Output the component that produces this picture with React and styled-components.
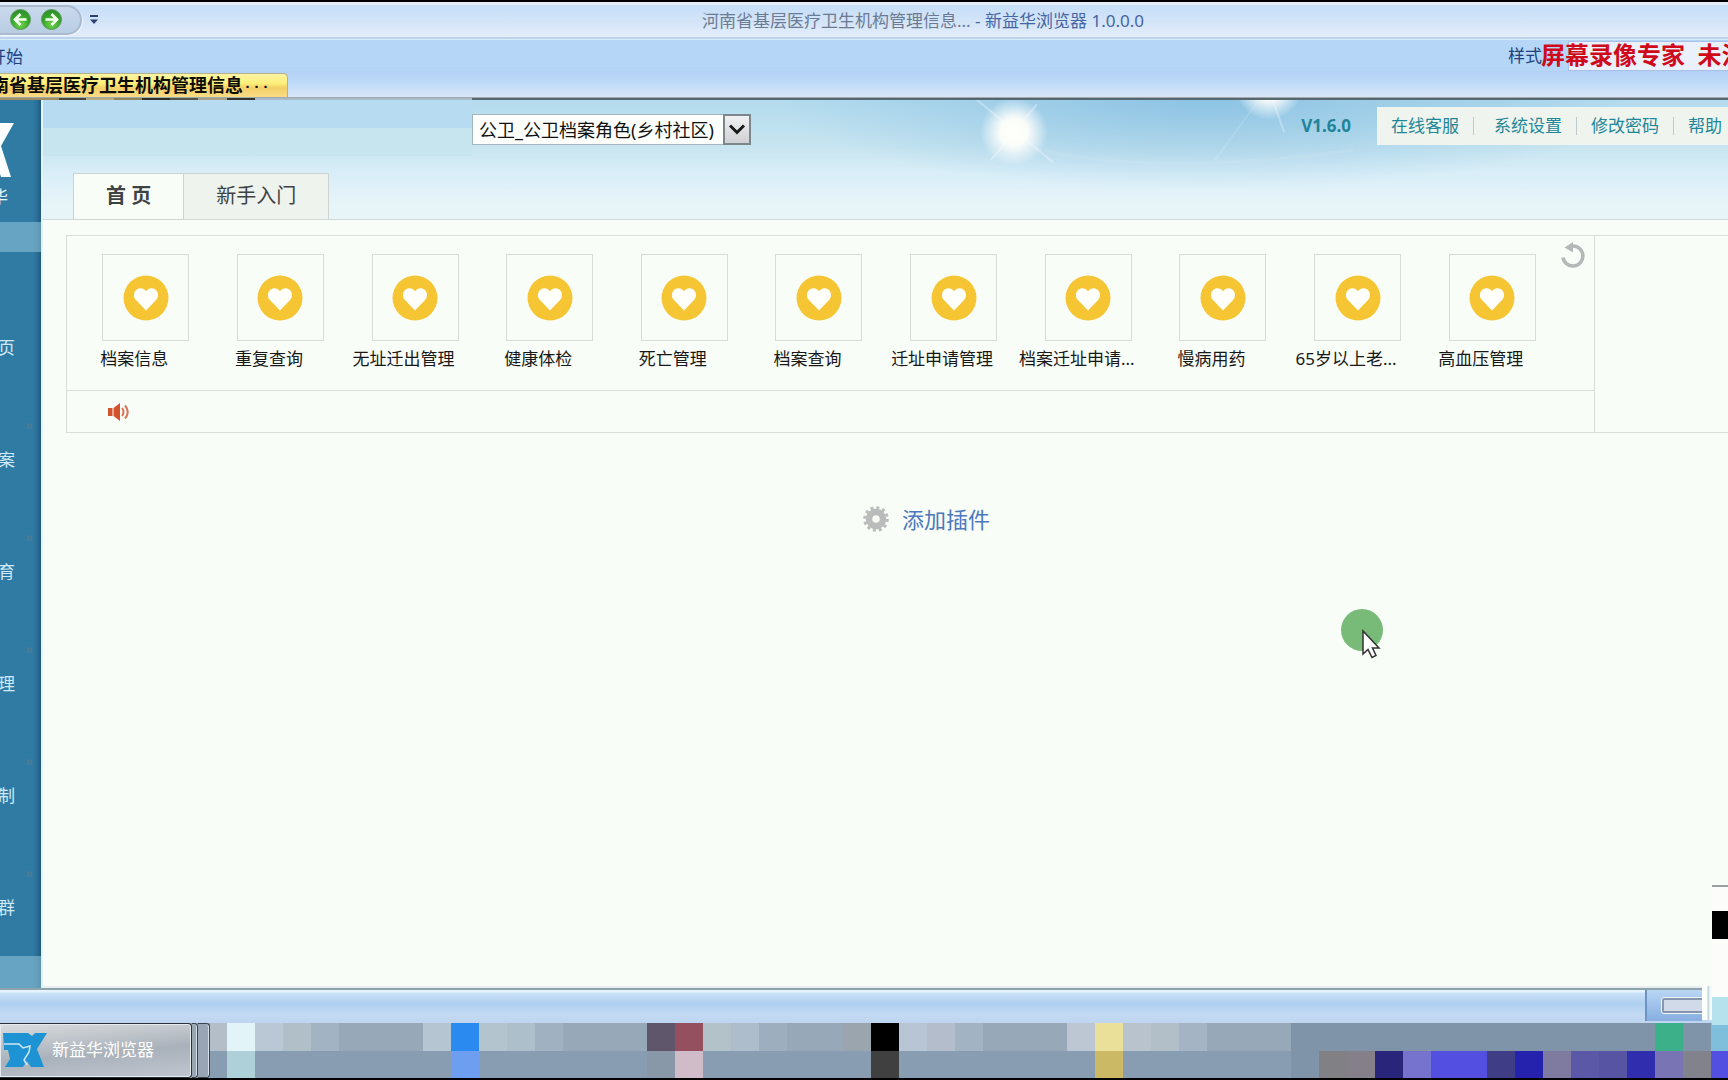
import React from "react";
import styled, { createGlobalStyle } from "styled-components";

const Global = createGlobalStyle`
  * { box-sizing: border-box; }
  body {
    margin: 0;
    overflow: hidden;
    font-family: "Noto Sans", "Noto Sans CJK SC", sans-serif;
    font-size: 17px;
    line-height: 24px;
    color: #222;
  }
  button, input, select { font: inherit; color: inherit; margin: 0; }
  button { padding: 0; border: 0; background: none; }
  a { color: inherit; text-decoration: none; }
`;

const Screen = styled.div`
  position: relative;
  display: flex;
  flex-direction: column;
  height: 100vh;
  overflow: hidden;
  background: #f8fdf7;
  border-top: 2px solid #000;
  border-bottom: 2px solid #000;
`;

/* ---------- window chrome ---------- */

const TitleBar = styled.header`
  flex: none;
  display: grid;
  grid-template-columns: 1fr auto 1fr;
  align-items: center;
  height: 37px;
  border-bottom: 2px solid #bdd3ea;
  background: linear-gradient(#e4eefa 0 3px, #c5def8 3px, #d5e5f8 60%, #e3edfa);
`;

const QuickTools = styled.div`
  display: flex;
  align-items: center;
  gap: 8px;
`;

const QuickPill = styled.div`
  display: flex;
  align-items: center;
  gap: 10px;
  height: 30px;
  padding: 0 18px 0 10px;
  border: 2px solid #a9bbd0;
  border-left: 0;
  border-radius: 0 16px 16px 0;
  background: linear-gradient(#c9d9ec, #b9cde3);
  box-shadow: 1px 1px 0 #eef5fd;
`;

const IconButton = styled.button`
  display: flex;
  align-items: center;
  justify-content: center;
`;

const Title = styled.h1`
  margin: 0;
  padding: 2px 0 0 118px;
  font-size: 17px;
  font-weight: 400;
  line-height: 24px;
  white-space: pre;
  color: #6b7b93;
`;

const AppName = styled.span`
  color: #4566a3;
`;

const TitleEnd = styled.div`
  min-width: 0;
`;

const Ribbon = styled.div`
  position: relative;
  flex: none;
  display: flex;
  align-items: center;
  justify-content: space-between;
  height: 32px;
  border-top: 1px solid #d8ebfb;
  background: #b5d6f6;
  color: #20417f;
`;

const ClippedLeft = styled.span`
  flex: none;
  display: flex;
  justify-content: flex-end;
  width: ${(p) => p.$width}px;
  overflow: hidden;
  white-space: nowrap;
`;

const RibbonButton = styled.button`
  padding-top: 2px;
`;

const StyleField = styled.label`
  display: flex;
  align-items: center;
  gap: 26px;
`;

const StyleInput = styled.input`
  width: 160px;
  height: 30px;
  border: 1px solid #a9c1e6;
  border-right: 0;
  background: #eaf1fb;
`;

const Watermark = styled.div`
  position: absolute;
  top: 0;
  right: 0;
  width: 187px;
  height: 31px;
  overflow: hidden;
  white-space: pre;
  font-size: 24px;
  font-weight: 700;
  line-height: 30px;
  color: #cf0a1a;
`;

const TabStrip = styled.div`
  flex: none;
  height: 26px;
  padding-top: 2px;
  background: linear-gradient(#b3cff3, #bfdbfa 45%, #d8e5f6);
`;

const BrowserTab = styled.button`
  display: flex;
  align-items: center;
  width: 288px;
  height: 24px;
  overflow: hidden;
  border: 1px solid #b3b38e;
  border-left: 0;
  border-bottom: 0;
  border-radius: 0 5px 0 0;
  background: linear-gradient(#fdf3a4, #fdf07a 40%, #f3cf68 60%, #fbdc85);
  font-size: 18px;
  font-weight: 700;
  line-height: 22px;
  padding-bottom: 2px;
  color: #0d0d05;
`;

const Dots = styled.span`
  font-family: "Liberation Mono", monospace;
  font-size: 15px;
`;

const Edge = styled.div`
  flex: none;
  height: 3px;
  border-top: 1px solid #9fa9ae;
  background: linear-gradient(
    90deg,
    #a08e5e 0 59px, #45453a 59px 86px, #b9ab80 86px 114px, #94855a 114px 142px,
    #2f3025 142px 170px, #55564a 170px 198px, #a8a184 198px 227px, #33352c 227px 255px,
    #a9bbc8 255px 472px, #56676f 472px
  );
`;

/* ---------- application ---------- */

const Body = styled.div`
  flex: 1;
  min-height: 0;
  display: flex;
`;

const Sidebar = styled.nav`
  flex: none;
  display: flex;
  flex-direction: column;
  width: 43px;
  border-right: 2px solid #dff5f8;
  background: linear-gradient(90deg, #2f7ba4 0 33px, #296f97 37px, #23597b);
  color: #cfeaf7;
`;

const Brand = styled.div`
  display: flex;
  flex-direction: column;
  gap: 8px;
  height: 122px;
  padding-top: 23px;
  color: #e9f6fb;
`;

const SideBand = styled.div`
  height: ${(p) => p.$height}px;
  background: rgba(160, 205, 225, 0.5);
`;

const SideList = styled.ul`
  flex: 1;
  min-height: 0;
  margin: 0;
  padding: 40px 0 0;
  list-style: none;
`;

const SideItem = styled.li`
  display: flex;
  flex-direction: column;
  height: 112px;
`;

const SideArrow = styled.span`
  flex: none;
  height: 44px;
  padding: 12px 8px 0 0;
  text-align: right;
  font-size: 15px;
  line-height: 16px;
  color: #547b91;
`;

const Main = styled.main`
  flex: 1;
  min-width: 0;
  display: flex;
  flex-direction: column;
  border-bottom: 2px solid #e6eeee;
`;

const Banner = styled.div`
  position: relative;
  flex: none;
  display: flex;
  flex-direction: column;
  justify-content: space-between;
  height: 120px;
  overflow: hidden;
  border-bottom: 1px solid #cfd6d6;
  background:
    linear-gradient(#b7dcf1 0 28px, #c6e5ee 28px) 0 0 / 429px 56px no-repeat,
    radial-gradient(ellipse 430px 90px at 69% 0, rgba(125, 185, 223, 0.7), rgba(125, 185, 223, 0)),
    linear-gradient(#b3dbee, #c8e5f0 40%, #d9eef8 62%, #e8f5f8 90%);
`;

const Sky = styled.svg`
  position: absolute;
  top: 0;
  left: 54%;
  width: 420px;
  height: 90px;
`;

const BannerTop = styled.div`
  position: relative;
  display: flex;
  align-items: flex-end;
  height: 45px;
  padding-left: 429px;
`;

const RoleField = styled.div`
  display: grid;
  grid-template-columns: 1fr 28px;
  width: 279px;
  height: 31px;
`;

const RoleSelect = styled.select`
  grid-area: 1 / 1 / 2 / 3;
  appearance: none;
  padding: 0 0 0 6px;
  border: 1px solid #a3b7bf;
  border-radius: 0;
  background: #fdfffd;
  font-size: 18px;
  color: #111;
`;

const RoleArrow = styled.span`
  grid-area: 1 / 2 / 2 / 3;
  display: flex;
  align-items: center;
  justify-content: center;
  border: 2px solid #7d868c;
  background: linear-gradient(#f1f1f3, #cfd0d4);
  pointer-events: none;
`;

const Version = styled.strong`
  margin-left: auto;
  padding-right: 26px;
  line-height: 38px;
  color: #1f8499;
`;

const TopLinks = styled.nav`
  display: flex;
  align-items: center;
  height: 38px;
  padding: 0 6px 0 14px;
  background: #eff4ef;
  color: #23879a;
`;

const Bar = styled.i`
  width: 1px;
  height: 18px;
  margin: 0 ${(p) => (p.$wide ? 20 : 14)}px 0 14px;
  background: #c0cacb;
`;

const PageTabs = styled.div`
  position: relative;
  display: flex;
  padding-left: 30px;
`;

const PageTab = styled.button`
  height: 46px;
  padding: 0 32px 2px;
  border: 1px solid #ccd3d1;
  border-bottom: 0;
  border-left-width: ${(p) => (p.$active ? 1 : 0)}px;
  background: ${(p) => (p.$active ? "#f8fdf7" : "#eff3ee")};
  font-size: 20px;
  font-weight: ${(p) => (p.$active ? 700 : 400)};
  line-height: 28px;
  color: #3d4243;
  white-space: pre;
`;

const Board = styled.section`
  display: flex;
  margin: 15px 0 0 23px;
  border: 1px solid #d7dedb;
  border-right: 0;
`;

const Panel = styled.div`
  flex: 1;
  min-width: 0;
  border-right: 1px solid #d7dedb;
`;

const BoardRest = styled.div`
  flex: none;
  width: 133px;
`;

const Shortcuts = styled.div`
  display: flex;
  height: 155px;
  border-bottom: 1px solid #d7dedb;
`;

const ShortcutGrid = styled.div`
  flex: 1;
  min-width: 0;
  display: grid;
  grid-template-columns: repeat(11, 1fr);
  padding-top: 18px;
`;

const Shortcut = styled.a`
  display: flex;
  flex-direction: column;
  align-items: center;
  gap: 6px;
  min-width: 0;
  white-space: nowrap;
  color: #181818;
`;

const Tile = styled.span`
  display: flex;
  align-items: center;
  justify-content: center;
  width: 87px;
  height: 87px;
  margin-left: 23px;
  border: 1px solid #d5dcda;
`;

const Tools = styled.div`
  width: 46px;
  padding: 6px 0 0 13px;
`;

const Notice = styled.div`
  display: flex;
  align-items: center;
  height: 41px;
  padding-left: 40px;
`;

const AddPlugin = styled.button`
  display: flex;
  align-items: center;
  align-self: center;
  gap: 13px;
  margin: 70px 0 0 82px;
  font-size: 22px;
  line-height: 32px;
  color: #4c78bd;
`;

/* ---------- status bar and taskbar ---------- */

const StatusBar = styled.div`
  flex: none;
  display: flex;
  justify-content: flex-end;
  height: 35px;
  padding-right: 26px;
  border-top: 2px solid #8fa3ad;
  background: linear-gradient(#e4f3fc 0 2px, #cbe2f7 3px, #afd0f0 40%, #c3daf3 75%, #bed4ef);
`;

const ZoomBox = styled.div`
  display: flex;
  align-items: center;
  justify-content: flex-end;
  width: 57px;
  height: 31px;
  border-left: 2px solid #6d93c4;
  background: linear-gradient(#b9d6f5, #86aee0);
`;

const ZoomTrack = styled.span`
  width: 40px;
  height: 15px;
  border: 2px solid #8696ae;
  border-right: 0;
  border-radius: 2px 0 0 2px;
  outline: 1px solid #eff5fc;
  background: #d1dae8;
`;

const Taskbar = styled.footer`
  flex: none;
  display: flex;
  height: 55px;
  background: #889db1;
`;

const TaskButton = styled.button`
  display: flex;
  align-items: center;
  gap: 5px;
  width: 192px;
  padding: 0 0 2px 3px;
  border: 1px solid #2c3238;
  border-left: 0;
  border-radius: 0 4px 4px 0;
  background: linear-gradient(175deg, #dadddf, #a9b1ba 55%, #bfc6cf);
  box-shadow: inset 0 0 0 1px #e6ebef;
  color: #fff;
`;

const TaskStack = styled.span`
  width: ${(p) => p.$width}px;
  border: 1px solid #39434f;
  border-left: 0;
  border-radius: 0 4px 4px 0;
  background: #98a5b4;
  box-shadow: inset -1px 0 0 #d8e0e8;
`;

const Mosaic = styled.div`
  flex: 1;
  min-width: 0;
  display: grid;
  grid-template-columns: 17px repeat(54, 28px);
  grid-template-rows: 28px 27px;
  overflow: hidden;
`;

const Block = styled.i`
  background: ${(p) => p.$color};
`;

/* ---------- things floating over the desktop ---------- */

const Pointer = styled.svg`
  position: absolute;
  left: 1341px;
  top: 606px;
  width: 44px;
  height: 52px;
`;

const SideWidget = styled.div`
  position: absolute;
  right: 0;
  bottom: 53px;
  display: flex;
  flex-direction: column;
  width: 16px;
  height: 140px;
  border-top: 2px solid #99a09f;
  background: #fcfcfb;
`;

const WidgetBlock = styled.i`
  height: 28px;
  margin-top: ${(p) => p.$top}px;
  background: ${(p) => p.$color};
`;

const WidgetGap = styled.i`
  position: absolute;
  right: 16px;
  bottom: 58px;
  width: 10px;
  height: 34px;
  background: linear-gradient(90deg, #fcfefc 5px, #b6cfd3 6px, #f4fafa 8px);
`;

/* ---------- drawings ---------- */

const GreenArrow = ({ flip, id }) => (
  <svg width="21" height="21" viewBox="0 0 21 21" aria-hidden="true">
    <defs>
      <radialGradient id={id} cx="50%" cy="75%" r="75%">
        <stop offset="0" stopColor="#6fd34a" />
        <stop offset="0.6" stopColor="#37a42b" />
        <stop offset="1" stopColor="#2c8a2c" />
      </radialGradient>
    </defs>
    <circle cx="10.5" cy="10.5" r="10" fill={`url(#${id})`} stroke="#5a9c5c" />
    <path
      d="M16.5 10.5H5.5M10.5 5 5 10.5l5.500 5.500"
      transform={flip ? "matrix(-1 0 0 1 21 0)" : undefined}
      fill="none"
      stroke="#f6fff2"
      strokeWidth="2.600"
    />
  </svg>
);

const MoreMark = () => (
  <svg width="8" height="10" viewBox="0 0 8 10" aria-hidden="true">
    <path d="M0 1h8" stroke="#2a4172" strokeWidth="2" />
    <path d="M0 4.500h8L4 9z" fill="#2a4172" />
  </svg>
);

const Heart = () => (
  <svg width="46" height="46" viewBox="0 0 46 46" aria-hidden="true">
    <circle cx="23" cy="23" r="22.500" fill="#f5c534" />
    <path
      d="M23 35.500 12.700 24.800C9.800 21.500 10.600 16.600 14 14.300c3-2 6.800-1.200 9 1.900 2.200-3.100 6-3.900 9-1.900 3.400 2.300 4.200 7.200 1.300 10.500z"
      fill="#fffffb"
    />
  </svg>
);

const Refresh = () => (
  <svg width="24" height="28" viewBox="0 0 24 28" aria-hidden="true">
    <path d="M2 15.500a10 10 0 1 0 10-11.500H9" fill="none" stroke="#b5b8b6" strokeWidth="3.600" />
    <path d="M3.500 5.500 12 0v10.500z" fill="#b5b8b6" />
  </svg>
);

const Speaker = () => (
  <svg width="24" height="20" viewBox="0 0 24 20" aria-hidden="true">
    <path d="M1 6h4.500v8H1zM6.500 6 13 1v18l-6.500-5z" fill="#d4532f" />
    <path d="M15 6q3 4 0 8M18 3.500q5.500 6.500 0 13" fill="none" stroke="#dc7556" strokeWidth="2" />
  </svg>
);

const Gear = () => (
  <svg width="26" height="26" viewBox="0 0 26 26" aria-hidden="true">
    <circle cx="13" cy="13" r="7" fill="none" stroke="#b9bcba" strokeWidth="6.500" />
    <circle cx="13" cy="13" r="11.300" fill="none" stroke="#b9bcba" strokeWidth="3" strokeDasharray="3 2.917" />
  </svg>
);

const TaskLogo = () => (
  <svg width="44" height="36" viewBox="0 0 44 36" aria-hidden="true">
    <path d="M0 1h25l4 3 3-3h12L34 17l7 18H28l-4-6-4 6H2l5-8-2-9H1z" fill="#1d93d3" />
    <path d="M1 12l15 0 4 4 7-2-1 6-5 8 3 5" fill="none" stroke="#cfe6f3" strokeWidth="1.500" />
  </svg>
);

const SideLogo = () => (
  <svg width="14" height="54" viewBox="0 0 14 54" aria-hidden="true">
    <path d="M0 0h14L1 23l10 31H1L0 51z" fill="#fbffff" />
  </svg>
);

/* ---------- data ---------- */

const shortcuts = [
  "档案信息", "重复查询", "无址迁出管理", "健康体检", "死亡管理", "档案查询",
  "迁址申请管理", "档案迁址申请...", "慢病用药", "65岁以上老...", "高血压管理",
];

const sideItems = ["页", "案", "育", "理", "制", "群"];

const base = "#97a9b9";
const dim = "#7f94a8";
const low = "#889db1";

const upperRow = [
  "#e2f4f7", "#b9c8d4", "#b0bfc8", "#a2b3c4", base, base, base, "#b5c5d2", "#2a8af0",
  "#b4c4ce", "#adbfca", "#a0b1c2", base, base, base, "#5f566b", "#94505f", "#b3c1c8",
  "#adbdcb", "#9dafbf", base, base, "#9ba5ad", "#000", "#b8c5d4", "#b3bdcb", "#a2b3c4",
  base, base, base, "#bcc7d3", "#ebe09a", "#b9c3ce", "#b3bfc8", "#a4b4c5", base, base, base,
  ...Array(13).fill(dim), "#3cb088", dim, "#80bfdc",
];

const lowerRow = [
  "#aed0d9", ...Array(7).fill(low), "#6e9eef", ...Array(6).fill(low), "#8998a8", "#d0bcc8",
  ...Array(6).fill(low), "#404040", ...Array(7).fill(low), "#cbb966", ...Array(6).fill(low),
  dim, "#808085", "#847f88", "#28257a", "#7673cf", "#534fe0", "#534fe0", "#3f3d86", "#2523ad",
  "#7f7a9f", "#5c58a8", "#5854a4", "#302daf", "#7975b5", "#82828c", "#534fe0",
];

const blocks = ["#b4bec9", ...upperRow, low, ...lowerRow];

export default function App() {
  return (
    <>
      <Global />
      <Screen>
        <TitleBar>
          <QuickTools>
            <QuickPill>
              <IconButton aria-label="后退"><GreenArrow id="back" /></IconButton>
              <IconButton aria-label="前进"><GreenArrow id="forward" flip /></IconButton>
            </QuickPill>
            <IconButton aria-label="更多"><MoreMark /></IconButton>
          </QuickTools>
          <Title>
            河南省基层医疗卫生机构管理信息... <AppName>- 新益华浏览器 1.0.0.0</AppName>
          </Title>
          <TitleEnd />
        </TitleBar>

        <Ribbon>
          <RibbonButton><ClippedLeft $width={23}>开始</ClippedLeft></RibbonButton>
          <StyleField>
            样式
            <StyleInput type="text" />
          </StyleField>
          <Watermark>屏幕录像专家  未注</Watermark>
        </Ribbon>

        <TabStrip>
          <BrowserTab>
            <ClippedLeft $width={243}>南省基层医疗卫生机构管理信息</ClippedLeft>
            <Dots>...</Dots>
          </BrowserTab>
        </TabStrip>
        <Edge />

        <Body>
          <Sidebar>
            <Brand>
              <SideLogo />
              <ClippedLeft $width={8}>华</ClippedLeft>
            </Brand>
            <SideBand $height={30} />
            <SideList>
              {sideItems.map((name, i) => (
                <SideItem key={name}>
                  <SideArrow>{i > 0 && "»"}</SideArrow>
                  <ClippedLeft as="a" href="#" $width={15}>{name}</ClippedLeft>
                </SideItem>
              ))}
            </SideList>
            <SideBand $height={32} />
          </Sidebar>

          <Main>
            <Banner>
              <Sky viewBox="0 0 420 90" aria-hidden="true">
                <defs>
                  <radialGradient id="sun">
                    <stop offset="0" stopColor="#fffffa" />
                    <stop offset="0.400" stopColor="#fffffa" stopOpacity="0.950" />
                    <stop offset="1" stopColor="#ffffff" stopOpacity="0" />
                  </radialGradient>
                </defs>
                <path d="M24 0 100 62M84 4 38 60" stroke="#fff" strokeOpacity="0.300" strokeWidth="2" />
                <circle cx="61" cy="32" r="34" fill="url(#sun)" />
                <circle cx="316" cy="-14" r="34" fill="url(#sun)" />
                <path d="M320 0 331 32" stroke="#fff" strokeOpacity="0.300" strokeWidth="2" />
                <path d="M306 0 262 60" stroke="#fff" strokeOpacity="0.120" strokeWidth="2" />
                <path d="M80 48Q200 78 400 50" fill="none" stroke="#fff" strokeOpacity="0.080" strokeWidth="3" />
              </Sky>
              <BannerTop>
                <RoleField>
                  <RoleSelect aria-label="角色">
                    <option>公卫_公卫档案角色(乡村社区)</option>
                  </RoleSelect>
                  <RoleArrow>
                    <svg width="16" height="11" viewBox="0 0 16 11" aria-hidden="true">
                      <path d="M1 1.500 8 8.500l7-7" fill="none" stroke="#16181a" strokeWidth="3" />
                    </svg>
                  </RoleArrow>
                </RoleField>
                <Version>V1.6.0</Version>
                <TopLinks>
                  <a href="#">在线客服</a>
                  <Bar $wide />
                  <a href="#">系统设置</a>
                  <Bar />
                  <a href="#">修改密码</a>
                  <Bar />
                  <a href="#">帮助</a>
                </TopLinks>
              </BannerTop>
              <PageTabs>
                <PageTab $active>首 页</PageTab>
                <PageTab>新手入门</PageTab>
              </PageTabs>
            </Banner>

            <Board>
              <Panel>
                <Shortcuts>
                  <ShortcutGrid>
                    {shortcuts.map((name) => (
                      <Shortcut href="#" key={name}>
                        <Tile><Heart /></Tile>
                        {name}
                      </Shortcut>
                    ))}
                  </ShortcutGrid>
                  <Tools>
                    <IconButton aria-label="刷新"><Refresh /></IconButton>
                  </Tools>
                </Shortcuts>
                <Notice><Speaker /></Notice>
              </Panel>
              <BoardRest />
            </Board>

            <AddPlugin>
              <Gear />
              添加插件
            </AddPlugin>
          </Main>
        </Body>

        <StatusBar>
          <ZoomBox><ZoomTrack /></ZoomBox>
        </StatusBar>

        <Taskbar>
          <TaskButton>
            <TaskLogo />
            新益华浏览器
          </TaskButton>
          <TaskStack $width={6} />
          <TaskStack $width={12} />
          <Mosaic>
            {blocks.map((color, i) => (
              <Block key={i} $color={color} />
            ))}
          </Mosaic>
        </Taskbar>

        <Pointer viewBox="0 0 44 52" aria-hidden="true">
          <circle cx="21" cy="22" r="21" fill="#78bb78" />
          <path d="M22 23v23l5-4.500 4 8 4-2-3.500-7.500h6.500z" fill="#fff" stroke="#333" strokeWidth="1.500" />
        </Pointer>
        <WidgetGap />
        <SideWidget>
          <WidgetBlock $top={24} $color="#000" />
          <WidgetBlock $top={58} $color="#b5e2ec" />
        </SideWidget>
      </Screen>
    </>
  );
}
